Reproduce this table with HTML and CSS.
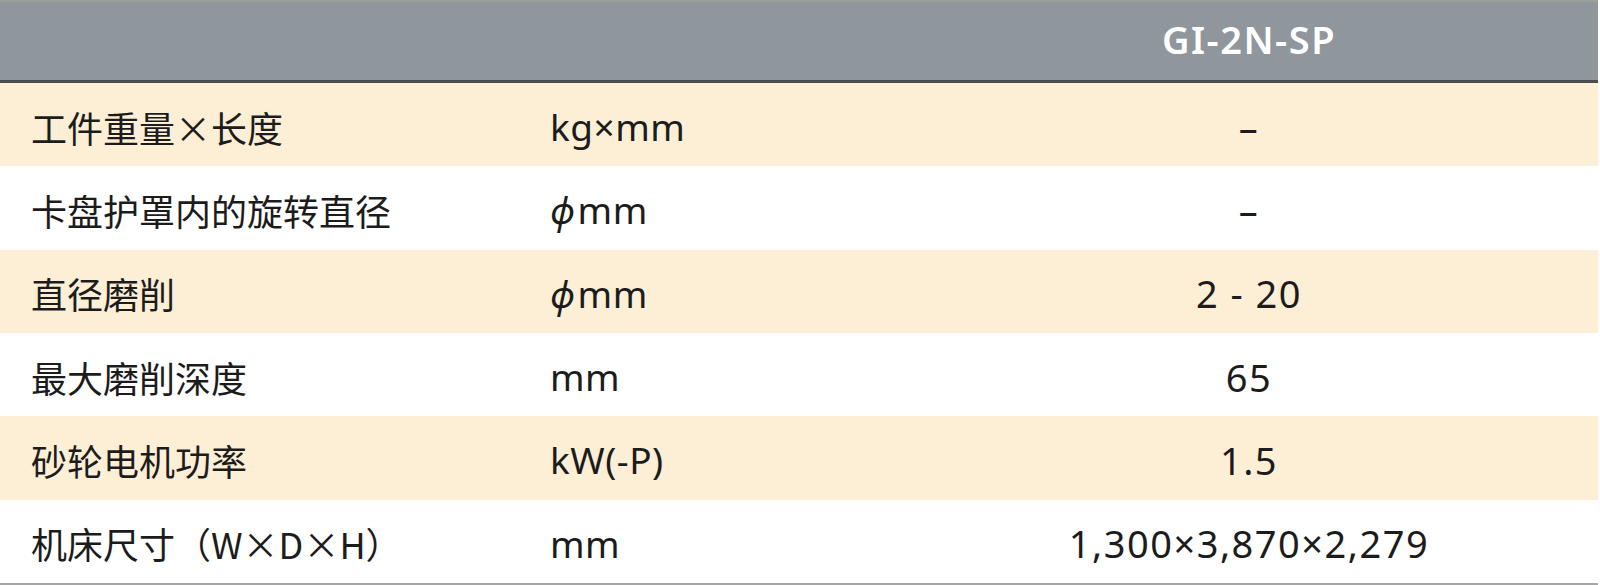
FILE: index.html
```html
<!DOCTYPE html>
<html lang="zh">
<head>
<meta charset="utf-8">
<link rel="stylesheet" href="styles.css">
</head>
<body>
<div class="spec">
  <div class="head">
    <div class="c-label"></div>
    <div class="c-unit"></div>
    <div class="c-val">GI-2N-SP</div>
  </div>
  <div class="row alt">
    <div class="c-label">工件重量×长度</div>
    <div class="c-unit">kg×mm</div>
    <div class="c-val">–</div>
  </div>
  <div class="row">
    <div class="c-label">卡盘护罩内的旋转直径</div>
    <div class="c-unit"><span class="dia">ϕ</span>mm</div>
    <div class="c-val">–</div>
  </div>
  <div class="row alt">
    <div class="c-label">直径磨削</div>
    <div class="c-unit"><span class="dia">ϕ</span>mm</div>
    <div class="c-val">2 - 20</div>
  </div>
  <div class="row">
    <div class="c-label">最大磨削深度</div>
    <div class="c-unit">mm</div>
    <div class="c-val">65</div>
  </div>
  <div class="row alt">
    <div class="c-label">砂轮电机功率</div>
    <div class="c-unit">kW(-P)</div>
    <div class="c-val">1.5</div>
  </div>
  <div class="row">
    <div class="c-label">机床尺寸（W×D×H）</div>
    <div class="c-unit">mm</div>
    <div class="c-val">1,300×3,870×2,279</div>
  </div>
</div>
</body>
</html>
```
FILE: styles.css
```css
html, body {
  margin: 0;
  padding: 0;
  background: #ffffff;
}
.spec {
  width: 1598px;
  font-family: "Noto Sans CJK SC", "Noto Sans", sans-serif;
  color: #1c1c1c;
  font-size: 36px;
  border-bottom: 2px solid #a6a6a6;
}
.head, .row {
  display: grid;
  grid-template-columns: 550px 350px 1fr;
  align-items: center;
}
.head {
  height: 78px;
  background: #8f969c;
  border-top: 2px solid #9aa19c;
  border-bottom: 3px solid #4a4c4e;
  color: #ffffff;
  font-family: "Noto Sans", sans-serif;
  font-weight: 600;
  font-size: 38px;
  letter-spacing: 1.5px;
}
.row {
  height: 83.33px;
}
.row.alt {
  background: #fdefd6;
}
.c-label {
  padding-left: 31px;
  padding-top: 4px;
}
.c-unit, .c-val {
  font-family: "Noto Sans", "Noto Sans CJK SC", sans-serif;
  font-size: 37px;
  letter-spacing: 1.5px;
  padding-top: 4px;
}
.c-unit {
  letter-spacing: 0.5px;
}
.c-val {
  text-align: center;
  font-size: 38px;
}
.dia {
  display: inline-block;
  font-style: italic;
  margin-right: 2px;
}
.head .c-val {
  padding-top: 0;
  padding-bottom: 4px;
}
```
